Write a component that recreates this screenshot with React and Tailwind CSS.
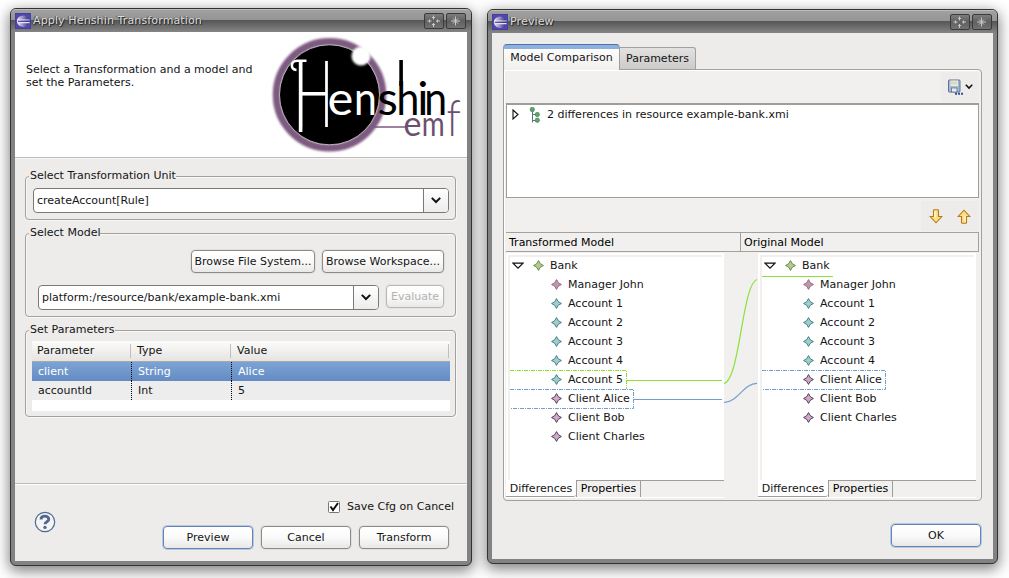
import React from "react";

function EclipseIcon() {
  return (
    <svg width="16" height="16" viewBox="0 0 16 16">
      <defs>
        <linearGradient id="ecl" x1="0" x2="1">
          <stop offset="0" stopColor="#f3d9ea" />
          <stop offset="0.5" stopColor="#8f86c4" />
          <stop offset="1" stopColor="#2c2a78" />
        </linearGradient>
      </defs>
      <rect width="16" height="16" fill="#5148ad" />
      <rect x="0.5" y="0.5" width="15" height="15" fill="none" stroke="#463f9c" />
      <circle cx="8.2" cy="8.2" r="5.8" fill="url(#ecl)" />
      <path d="M4.6 3.5A5.8 5.8 0 0 0 4.6 12.9A9 9 0 0 1 4.6 3.5Z" fill="#fbeef0" />
      <path d="M2.5 7h12M2.5 9.6h12" stroke="#e4e6f6" strokeWidth="1.1" />
      <path d="M3 8.3h11.5" stroke="#39378a" strokeWidth="1" />
    </svg>
  );
}

function TitleButton({ children }) {
  return (
    <div className="flex h-[16px] w-[20px] items-center justify-center rounded-[2px] border border-[#3a3a3a] bg-linear-to-b from-[#7d7d7d] via-[#606060] to-[#727272]">
      <svg width="14" height="12" viewBox="0 0 14 12" fill="none" stroke="#c9c9c9">
        {children}
      </svg>
    </div>
  );
}

function Win({ title, className, children }) {
  return (
    <div
      className={
        "flex shrink-0 flex-col rounded-[6px] border border-[#333] bg-[#828282] px-[4px] pb-[4px] shadow-[0_4px_14px_1px_rgba(0,0,0,0.5)] " +
        className
      }
    >
      <div className="-mx-[4px] flex h-[23px] shrink-0 items-center rounded-t-[5px] border-t border-[#bdbdbd] bg-[linear-gradient(#a0a0a0,#959595_45%,#555_46%,#858585)] pl-[4px] pr-[5px]">
        <EclipseIcon />
        <span className="-mt-px ml-[2px] text-[11px] leading-[14px] tracking-[0.13px] text-[#dcdcd8] [text-shadow:1px_1px_1px_#222,-1px_0_1px_#444]">
          {title}
        </span>
        <div className="-mt-px ml-auto flex gap-[2px]">
          <TitleButton>
            <path d="M6.5 0.5v4M6.5 8v4M0.5 6h4M9 6h4" />
            <path d="M5 2.5h3M5 9.5h3M2.5 4.5v3M10.5 4.5v3" />
          </TitleButton>
          <TitleButton>
            <path d="M6.5 1.5v9M2 6h9" />
            <path d="M4 3.5l5 5M9 3.5l-5 5" strokeWidth="1" />
          </TitleButton>
        </div>
      </div>
      <div className="flex min-h-0 flex-1 flex-col bg-[#edecea]">{children}</div>
    </div>
  );
}

function Logo() {
  return (
    <svg className="shrink-0" width="200" height="125" viewBox="267 32 200 125">
      <defs>
        <filter id="soft" x="-20%" y="-20%" width="140%" height="140%">
          <feGaussianBlur stdDeviation="1.3" />
        </filter>
      </defs>
      <circle cx="329.5" cy="94.8" r="53" fill="none" stroke="#7d5a80" strokeWidth="7.5" filter="url(#soft)" />
      <circle cx="329.5" cy="94.8" r="50" fill="#000" stroke="#d9cfda" strokeWidth="0.8" />
      <circle cx="361" cy="56" r="9.5" fill="#fff" filter="url(#soft)" />
      <path d="M374 127H407" stroke="#7d5a80" strokeWidth="1.6" />
      <path d="M296.5 70C289.5 69.5 291 60.8 297 60.8H306.5" fill="none" stroke="#fff" strokeWidth="2.6" />
      <path d="M300.6 60V132" stroke="#fff" strokeWidth="3.6" />
      <g fontFamily="Lato">
        <text transform="translate(294 127) scale(1.04 1.85)" fontSize="50" fontWeight="300" fill="#fff">H</text>
        <text transform="translate(327.6 115) scale(1.04 1)" fontSize="47" fill="#fff">e</text>
        <text transform="translate(354 115) scale(0.87 1)" fontSize="47" fill="#fff">n</text>
        <text transform="translate(377.5 115)" fontSize="47" fill="#000">s</text>
        <text transform="translate(396.4 115) scale(0.87 1)" fontSize="47" fill="#000">h</text>
        <text transform="translate(417.2 115)" fontSize="47" fill="#000">i</text>
        <text transform="translate(424.2 115) scale(0.87 1)" fontSize="47" fill="#000">n</text>
        <text fontSize="34" y="136" x="403.6" fill="#6d5070">e</text>
        <text transform="translate(421.8 136) scale(0.82 1)" fontSize="34" fill="#6d5070">m</text>
        <text transform="translate(446.4 136) scale(1.2 1.48)" fontSize="35" fontWeight="300" fill="#6d5070">f</text>
      </g>
      <path d="M401.1 60V86" stroke="#000" strokeWidth="3.6" />
    </svg>
  );
}

function Button({ children, className = "", primary, disabled }) {
  return (
    <div
      className={
        "flex items-center justify-center rounded-[4px] border bg-linear-to-b from-white via-[#fafafa] to-[#e9e8e7] whitespace-nowrap " +
        (primary
          ? "border-[#6484b4] shadow-[0_0_0_1px_#b5c9e4] "
          : disabled
            ? "border-[#b9b7b4] text-[#b4b2b0] shadow-[0_0_0_1px_#e4e3e1] "
            : "border-[#8d8b88] shadow-[0_0_0_1px_#e0dfdd] ") +
        className
      }
    >
      {children}
    </div>
  );
}

function Chevron() {
  return (
    <svg className="-mt-px" width="10" height="7" viewBox="0 0 10 7" fill="none" stroke="#111" strokeWidth="2">
      <path d="M0.8 0.9L5 5L9.2 0.9" />
    </svg>
  );
}

function Combo({ text, className }) {
  return (
    <div className={"flex h-[25px] rounded-[4px] border border-[#7b7977] bg-white " + className}>
      <span className="flex flex-1 items-center pl-[3px]">{text}</span>
      <div className="flex w-[25px] items-center justify-center rounded-r-[3px] border-l border-[#7b7977] bg-linear-to-b from-white to-[#ececeb]">
        <Chevron />
      </div>
    </div>
  );
}

function Group({ label, className, children }) {
  return (
    <div className={"rounded-[4px] border border-[#a3a19e] shadow-[inset_1px_1px_0_#f8f8f7,1px_1px_0_#f8f8f7] " + className}>
      <div className="-mt-[8px] ml-[3px] flex h-[14px]">
        <span className="bg-[#edecea] pl-px leading-[14px]">{label}</span>
      </div>
      {children}
    </div>
  );
}

function ParamRow({ cells, className }) {
  return (
    <div className={"flex items-center " + className}>
      <span className="flex h-full w-[100px] items-center border-r border-dotted border-black pl-[6px]">{cells[0]}</span>
      <span className="flex h-full w-[100px] items-center border-r border-dotted border-black pl-[6px]">{cells[1]}</span>
      <span className="pl-[6px]">{cells[2]}</span>
    </div>
  );
}

const STAR = {
  green: ["#6b8c3c", "#b5c69a"],
  pink: ["#b9578c", "#a5a5a5"],
  teal: ["#35868a", "#a9c9c8"],
  purple: ["#4a464c", "#d3a5d0"],
};

function Star({ kind }) {
  const [edge, fill] = STAR[kind];
  return (
    <svg width="11" height="11" viewBox="0 0 11 11">
      <path d="M5.5 0.6L7.3 3.7L10.4 5.5L7.3 7.3L5.5 10.4L3.7 7.3L0.6 5.5L3.7 3.7Z" fill={fill} stroke={edge} strokeWidth="1" />
    </svg>
  );
}

function TreePane({ items, className }) {
  return (
    <div className={"flex flex-col bg-white " + className}>
      <div className="mt-[2px] ml-[2px] mr-[2px] h-[225px] border-l-2 border-t-2 border-[#f1f0ee]">
        <div className="-mt-px flex h-[19px] items-center pl-[2px]">
          <svg width="12" height="8" viewBox="0 0 12 8">
            <path d="M1 1.2H11L6 6.2Z" fill="#fff" stroke="#111" strokeWidth="1.2" />
          </svg>
          <span className="ml-[9px] flex"><Star kind="green" /></span>
          <span className="ml-[6px]">Bank</span>
        </div>
        {items.map(([name, kind]) => (
          <div key={name} className="flex h-[19px] items-center pl-[41px]">
            <Star kind={kind} />
            <span className="ml-[6px] whitespace-nowrap">{name}</span>
          </div>
        ))}
      </div>
      <div className="flex h-[17px]">
        <span className="flex w-[70px] shrink-0 items-center justify-center rounded-br-[3px] border-b border-[#9f9d9a] pt-px">Differences</span>
        <div className="flex flex-1 border-t border-l border-[#9f9d9a] bg-[#f1f0ee]">
          <span className="flex w-[64px] items-center justify-center border-r border-[#9f9d9a] text-black">Properties</span>
        </div>
      </div>
    </div>
  );
}

const accounts = (n) => Array.from({ length: n }, (_, i) => ["Account " + (i + 1), "teal"]);
const clients = [["Client Alice", "purple"], ["Client Bob", "purple"], ["Client Charles", "purple"]];

function TransformDialog() {
  return (
    <Win title="Apply Henshin Transformation" className="h-[558px] w-[462px]">
      <div className="flex h-[125px] shrink-0 justify-between bg-white">
        <p className="mt-[31px] ml-[11px] leading-[13px] whitespace-nowrap">
          Select a Transformation and a model and
          <br />
          set the Parameters.
        </p>
        <Logo />
      </div>
      <div className="h-[2px] shrink-0 border-t border-b border-t-[#bcbbb9] border-b-[#f8f8f8]" />
      <div className="flex h-[324px] shrink-0 flex-col px-[10px] pt-[17px]">
        <Group label="Select Transformation Unit" className="h-[44px] w-[431px]">
          <Combo text="createAccount[Rule]" className="mt-[5px] ml-[7px] w-[416px]" />
        </Group>
        <Group label="Select Model" className="mt-[13px] h-[84px] w-[431px]">
          <div className="mt-[10px] mr-[11px] flex justify-end gap-[7px]">
            <Button className="h-[23px] w-[124px]">Browse File System...</Button>
            <Button className="h-[23px] w-[122px]">Browse Workspace...</Button>
          </div>
          <div className="mt-[12px] ml-[12px] flex gap-[7px]">
            <Combo text="platform:/resource/bank/example-bank.xmi" className="w-[341px]" />
            <Button disabled className="h-[23px] w-[58px]">Evaluate</Button>
          </div>
        </Group>
        <Group label="Set Parameters" className="mt-[13px] h-[87px] w-[431px]">
          <div className="mt-[4px] ml-[6px] h-[70px] w-[418px] bg-white">
            <div className="flex h-[21px] items-center border-b border-[#aaa8a5] bg-linear-to-b from-[#fcfcfb] to-[#e6e4e2]">
              <span className="flex h-[14px] w-[99px] items-center border-r border-[#c1bfbc] pl-[5px]">Parameter</span>
              <span className="flex h-[14px] w-[100px] items-center border-r border-[#c1bfbc] pl-[6px]">Type</span>
              <span className="flex h-[14px] w-[218px] items-center border-r border-[#c1bfbc] pl-[6px]">Value</span>
            </div>
            <ParamRow cells={["client", "String", "Alice"]} className="h-[19px] bg-linear-to-b from-[#7ca3d4] to-[#648cc4] text-white" />
            <ParamRow cells={["accountId", "Int", "5"]} className="h-[19px] bg-[#ededed]" />
          </div>
        </Group>
      </div>
      <div className="flex flex-1 border-t border-[#bcbbb9] shadow-[inset_0_1px_0_#fff]">
        <div className="mt-[27px] ml-[19px]">
          <svg width="22" height="22" viewBox="0 0 22 22">
            <circle cx="11" cy="11" r="9.7" fill="#f4f4f5" stroke="#526a94" strokeWidth="1.2" />
            <path d="M7 8.4C7 4 14.8 4.2 14.8 8.2C14.8 10.8 11 10.6 11 13.2" fill="none" stroke="#53688f" strokeWidth="2.8" />
            <circle cx="11" cy="16.4" r="1.7" fill="#53688f" />
          </svg>
        </div>
        <div className="ml-auto flex flex-col">
          <div className="mt-[16px] mr-[13px] flex items-center justify-end">
            <svg width="12" height="12" viewBox="0 0 12 12">
              <rect x="0.5" y="0.5" width="11" height="11" rx="1" fill="#fff" stroke="#777" />
              <path d="M2.5 5.5L5 9L10 2" fill="none" stroke="#111" strokeWidth="2" />
            </svg>
            <span className="ml-[7px]">Save Cfg on Cancel</span>
          </div>
          <div className="mt-[12px] mr-[18px] flex gap-[8px]">
            <Button primary className="h-[23px] w-[90px]">Preview</Button>
            <Button className="h-[23px] w-[90px]">Cancel</Button>
            <Button className="h-[23px] w-[90px]">Transform</Button>
          </div>
        </div>
      </div>
    </Win>
  );
}

function YellowArrow({ up }) {
  return (
    <svg width="14" height="15" viewBox="0 0 14 15" className={up ? "rotate-180" : ""}>
      <path d="M4.5 1.5Q4.5 0.7 5.3 0.7H8.7Q9.5 0.7 9.5 1.5V7.5H12.8L7 13.8L1.2 7.5H4.5Z" fill="#fbdf80" stroke="#b8791d" strokeWidth="1.1" />
      <path d="M6 2.3V8.5" stroke="#fff6cf" strokeWidth="1.6" />
    </svg>
  );
}

function PreviewDialog() {
  return (
    <Win title="Preview" className="mt-[1px] h-[555px] w-[511px]">
      <div className="flex flex-1 flex-col pl-[11px]">
        <div className="relative z-10 mt-[11px] flex h-[26px] items-end">
          <div className="flex h-[26px] w-[117px] items-center justify-center rounded-t-[4px] border-x border-t border-[#9f9d9a] border-t-[#4a74ad] bg-[linear-gradient(#8db0dc,#8db0dc_4px,#fcfcfc_4px,#f1f0ee)]">
            Model Comparison
          </div>
          <div className="mb-px flex h-[22px] w-[76px] items-center justify-center rounded-tr-[3px] border-t border-r border-[#a3a19e] bg-linear-to-b from-[#e3e2e1] to-[#cccbca] pt-px">
            Parameters
          </div>
        </div>
        <div className="-mt-px flex h-[432px] w-[479px] shrink-0 flex-col rounded-r-[4px] rounded-bl-[4px] border border-[#a3a19e] bg-[#f1f0ee] px-[2px] shadow-[inset_1px_1px_0_#fff]">
          <div className="flex h-[33px] justify-end">
            <div className="mt-[2px] flex h-[30px] w-[38px] items-center gap-[2px] bg-[#edecea] pl-[7px]">
              <svg width="15" height="16" viewBox="0 0 15 16">
                <rect x="0.5" y="1" width="11.5" height="12" rx="0.8" fill="#a3b9d6" stroke="#5f7391" />
                <rect x="2.5" y="1.5" width="7.5" height="5.5" fill="#f4f1df" />
                <path d="M3 3.2h6.5M3 5h6.5" stroke="#b9b79e" strokeWidth="0.7" />
                <rect x="3.5" y="9" width="5.5" height="4" fill="#e7eef6" stroke="#5f7391" strokeWidth="0.8" />
                <path d="M7 14.8h2M10 14.8h2M13 14.8h2" stroke="#2e4d93" strokeWidth="2" />
              </svg>
              <svg width="8" height="6" viewBox="0 0 8 6" fill="none" stroke="#111" strokeWidth="1.6">
                <path d="M0.8 0.8L4 4L7.2 0.8" />
              </svg>
            </div>
          </div>
          <div className="h-[95px] w-[473px] shrink-0 border border-t-2 border-[#9f9c99] bg-white">
            <div className="flex h-[19px] items-center pl-[5px]">
              <svg className="-mt-px" width="7" height="11" viewBox="0 0 7 11">
                <path d="M1 1L6 5.5L1 10Z" fill="#fff" stroke="#111" strokeWidth="1.1" />
              </svg>
              <svg className="ml-[10px]" width="12" height="16" viewBox="0 0 12 16">
                <path d="M3.5 3V15.5M3.5 13.5H7M3.5 7.5H7" fill="none" stroke="#5b7088" />
                <g fill="#5fa56c" stroke="#397c48" strokeWidth="0.6">
                  <circle cx="3.3" cy="2.5" r="2.2" />
                  <circle cx="8.3" cy="7.5" r="2.2" />
                  <circle cx="8.3" cy="13.2" r="2.2" />
                </g>
              </svg>
              <span className="ml-[6px]">2 differences in resource example-bank.xmi</span>
            </div>
          </div>
          <div className="flex h-[34px] shrink-0 justify-end">
            <div className="mt-[3px] flex h-[30px] w-[58px] items-center gap-[14px] bg-[#edecea] pl-[8px]">
              <YellowArrow />
              <YellowArrow up />
            </div>
          </div>
          <div className="flex h-[20px] w-[473px] shrink-0 items-center border border-l-0 border-[#a3a19e] text-black">
            <span className="flex h-full w-[235px] items-center border-r border-[#a3a19e] pt-px pl-[3px]">Transformed Model</span>
            <span className="pt-px pl-[3px]">Original Model</span>
          </div>
          <div className="relative flex h-[246px] w-[473px] pt-px">
            <TreePane className="w-[218px]" items={[["Manager John", "pink"], ...accounts(5), ...clients]} />
            <div className="w-[34px]" />
            <TreePane className="w-[218px]" items={[["Manager John", "pink"], ...accounts(4), ...clients]} />
            <svg className="absolute top-0 left-0" width="472" height="246" viewBox="506 252 472 246" fill="none">
              <g stroke="#8ae234">
                <path d="M510 370.5H626.5V389" strokeDasharray="4 1 1 1" />
                <path d="M627 380.5H722M762 276.5H833" />
                <path d="M724 383.5C740 380 742 284 757 279.5" strokeWidth="1.2" />
              </g>
              <g stroke="#729fcf">
                <path d="M510 389.5H633.5V408.5H510" strokeDasharray="4 1 1 1" />
                <path d="M634 399.5H722" />
                <path d="M724 402.3C737 403 744 383 757 383.3" strokeWidth="1.2" />
                <path d="M762 370.5H885.5V389.5H762" strokeDasharray="4 1 1 1" />
              </g>
            </svg>
          </div>
        </div>
        <div className="mt-[23px] mr-[12px] flex justify-end">
          <Button primary className="h-[23px] w-[90px]">OK</Button>
        </div>
      </div>
    </Win>
  );
}

export default function App() {
  return (
    <div className="flex h-[578px] w-[1009px] items-start gap-[15px] overflow-hidden bg-white pt-[8px] pl-[10px] font-['DejaVu_Sans',sans-serif] text-[11px] leading-[14px] text-[#141414]">
      <TransformDialog />
      <PreviewDialog />
    </div>
  );
}
